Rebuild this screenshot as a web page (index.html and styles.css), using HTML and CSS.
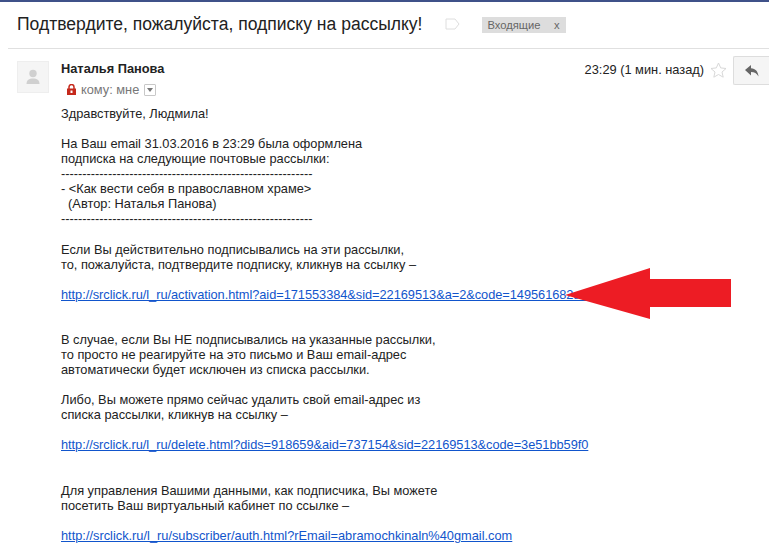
FILE: index.html
```html
<!DOCTYPE html>
<html lang="ru">
<head>
  <meta charset="UTF-8">
  <meta name="viewport" content="width=device-width, initial-scale=1.0">
  <title>Подтвердите, пожалуйста, подписку на рассылку!</title>
  <link rel="stylesheet" href="styles.css">
</head>
<body>
  <div class="topline"></div>

  <header class="subject">
    <h1>Подтвердите, пожалуйста, подписку на рассылку!</h1>
    <svg class="tag-icon" width="15" height="12" viewBox="0 0 15 12">
      <path d="M1 1h9l4 5-4 5H1z" fill="#fff" stroke="#dedede" stroke-width="1"/>
    </svg>
    <span class="label">Входящие <span class="label-x">x</span></span>
  </header>

  <section class="message">
    <div class="avatar">
      <svg width="14" height="16" viewBox="0 0 14 16">
        <circle cx="7" cy="4.500" r="3.700" fill="#d0d0d0"/>
        <path d="M0.500 15c0-4 2.500-5.600 6.500-5.600s6.500 1.600 6.500 5.600z" fill="#d0d0d0"/>
      </svg>
    </div>

    <div class="content">
      <div class="meta">
        <div class="sender">
          <div class="name">Наталья Панова</div>
          <div class="recipient">
            <svg class="lock" width="9" height="11" viewBox="0 0 9 11">
              <path d="M2 5V3a2.500 2.500 0 0 1 5 0V5" fill="none" stroke="#c5291c" stroke-width="1.500"/>
              <rect x="0" y="4.500" width="9" height="6.500" fill="#c5291c"/>
              <rect x="3.500" y="6.500" width="2" height="2.500" fill="#fff"/>
            </svg>
            <span>кому: мне</span>
            <span class="dropdown"><i></i></span>
          </div>
        </div>
        <div class="actions">
          <span class="time">23:29 (1 мин. назад)</span>
          <svg class="star" width="17" height="16" viewBox="0 0 17 16">
            <path d="M8.500 1l2.200 4.900 5.300.6-4 3.500 1.200 5.200-4.700-2.700-4.700 2.700 1.200-5.200-4-3.500 5.300-.6z" fill="#fff" stroke="#d8d8d8"/>
          </svg>
          <button class="reply" type="button">
            <svg width="14" height="12" viewBox="0 0 14 12">
              <path d="M6 0v3.200c4.500.3 7 3.200 7.500 8.300C11.800 8.300 9.500 7 6 7v3.500L0 5z" fill="#666"/>
            </svg>
          </button>
        </div>
      </div>

      <div class="body-text">
        <p>Здравствуйте, Людмила!</p>
        <p>На Ваш email 31.03.2016 в 23:29 была оформлена<br>
        подписка на следующие почтовые рассылки:<br>
        -----------------------------------------------------------<br>
        - &lt;Как вести себя в православном храме&gt;<br>
        &nbsp; (Автор: Наталья Панова)<br>
        -----------------------------------------------------------</p>
        <p>Если Вы действительно подписывались на эти рассылки,<br>
        то, пожалуйста, подтвердите подписку, кликнув на ссылку –</p>
        <p><a class="tight" href="#">http://srclick.ru/l_ru/activation.html?aid=171553384&amp;sid=22169513&amp;a=2&amp;code=149561682a3</a></p>
        <p class="gap">В случае, если Вы НЕ подписывались на указанные рассылки,<br>
        то просто не реагируйте на это письмо и Ваш email-адрес<br>
        автоматически будет исключен из списка рассылки.</p>
        <p>Либо, Вы можете прямо сейчас удалить свой email-адрес из<br>
        списка рассылки, кликнув на ссылку –</p>
        <p><a class="tight" href="#">http://srclick.ru/l_ru/delete.html?dids=918659&amp;aid=737154&amp;sid=22169513&amp;code=3e51bb59f0</a></p>
        <p class="gap">Для управления Вашими данными, как подписчика, Вы можете<br>
        посетить Ваш виртуальный кабинет по ссылке –</p>
        <p><a href="#">http://srclick.ru/l_ru/subscriber/auth.html?rEmail=abramochkinaln%40gmail.com</a></p>
      </div>
    </div>
  </section>

  <svg class="arrow" width="170" height="55" viewBox="0 0 170 55">
    <path d="M0 27 85 0V11H166V39H85V51z" fill="#ed1c24"/>
  </svg>
</body>
</html>
```

FILE: styles.css
```css
* {
  box-sizing: border-box;
}

html,
body {
  height: 545px;
  overflow: hidden;
}

body {
  margin: 0;
  font-family: "Liberation Sans", Arial, sans-serif;
  font-size: 12.8px;
  color: #222;
  background-color: #fff;
}

.topline {
  height: 2px;
  background-color: #3f5189;
}

.subject {
  display: flex;
  align-items: center;
  height: 47px;
  margin-left: 8px;
  padding: 0 0 2px 9px;
  border-bottom: 1px solid #e0e0e0;
}

.subject h1 {
  margin: 0;
  font-size: 17.55px;
  font-weight: 400;
  color: #222;
}

.tag-icon {
  margin-left: 22px;
}

.label {
  display: flex;
  justify-content: space-between;
  width: 84px;
  margin: 2px 0 0 22px;
  padding: 0 6px;
  background-color: #ddd;
  color: #666;
  font-size: 11.2px;
  line-height: 16px;
}

.message {
  display: flex;
  padding: 12px 0 0 17px;
}

.avatar {
  display: flex;
  align-items: center;
  justify-content: center;
  flex: none;
  width: 32px;
  height: 32px;
  background-color: #f5f5f5;
  border: 1px solid #eee;
}

.content {
  flex: 1;
  margin-left: 12px;
}

.meta {
  display: flex;
  justify-content: space-between;
  height: 45px;
}

.name {
  font-weight: 700;
  line-height: 15px;
}

.recipient {
  display: flex;
  align-items: center;
  gap: 5px;
  margin: 6px 0 0 6px;
  color: #777;
  line-height: 15px;
}

.dropdown {
  display: flex;
  align-items: center;
  justify-content: center;
  width: 12px;
  height: 12px;
  border: 1px solid #c8c8c8;
  border-radius: 1px;
}

.dropdown i {
  border-top: 4px solid #777;
  border-left: 3px solid transparent;
  border-right: 3px solid transparent;
}

.actions {
  display: flex;
  align-items: flex-start;
  height: 29px;
  margin-top: -5px;
}

.time {
  margin-top: 6px;
  color: #222;
}

.star {
  margin: 6px 0 0 6px;
}

.reply {
  display: flex;
  align-items: center;
  justify-content: center;
  width: 36px;
  height: 29px;
  margin-left: 6px;
  padding: 0;
  background-color: #f5f5f5;
  border: 1px solid #ddd;
  border-right: 0;
  border-radius: 2px 0 0 2px;
}

.body-text {
  line-height: 15.07px;
  white-space: nowrap;
}

.body-text p {
  margin: 0 0 15.07px;
}

.body-text p.gap {
  margin-top: 30.14px;
}

.body-text a {
  color: #15c;
}

.body-text a.tight {
  letter-spacing: -0.04px;
}

.arrow {
  position: absolute;
  left: 565px;
  top: 268px;
}
```
